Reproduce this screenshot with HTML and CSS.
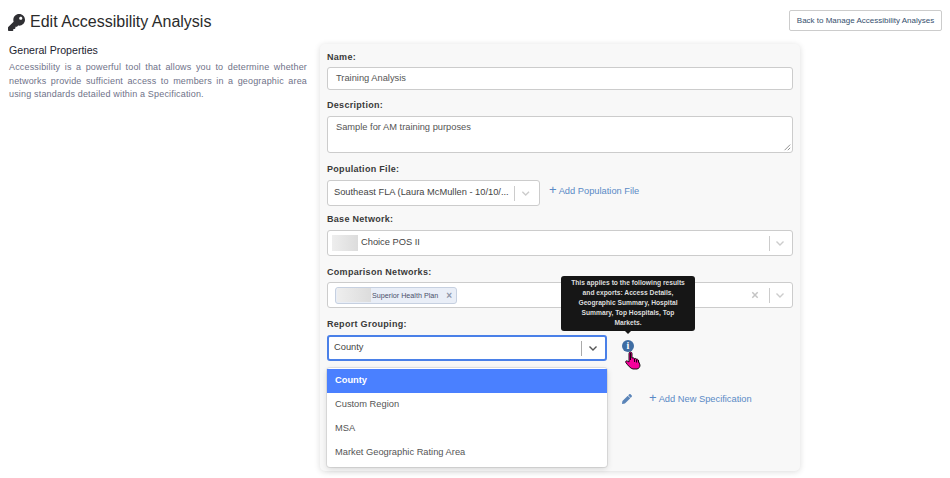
FILE: index.html
```html
<!DOCTYPE html>
<html lang="en">
  <head>
    <meta charset="UTF-8" />
    <meta name="viewport" content="width=device-width, initial-scale=1.0" />
    <title>Edit Accessibility Analysis</title>
    <link rel="stylesheet" href="styles.css">
  </head>

  <body>
    <header class="page-head">
      <h1 class="page-title">
        <svg class="key-icon" viewBox="0 0 512 512"><path d="M512 176.001C512 273.203 433.202 352 336 352c-11.22 0-22.19-1.062-32.827-3.069l-24.012 27.014A23.999 23.999 0 0 1 261.223 384H224v40c0 13.255-10.745 24-24 24h-40v40c0 13.255-10.745 24-24 24H24c-13.255 0-24-10.745-24-24v-78.059c0-6.365 2.529-12.47 7.029-16.971l161.802-161.802C163.108 213.814 160 195.271 160 176 160 78.798 238.797.001 335.999 0 433.488-.001 512 78.511 512 176.001zM336 128c0 26.51 21.49 48 48 48s48-21.49 48-48-21.49-48-48-48-48 21.49-48 48z"/></svg>
        Edit Accessibility Analysis
      </h1>
      <button class="back-btn">Back to Manage Accessibility Analyses</button>
    </header>

    <main class="columns">
      <section class="intro">
        <h2>General Properties</h2>
        <p>Accessibility is a powerful tool that allows you to determine whether networks provide sufficient access to members in a geographic area using standards detailed within a Specification.</p>
      </section>

      <form class="panel">
        <div class="field field-name">
          <label>Name:</label>
          <div class="text-input">Training Analysis</div>
        </div>

        <div class="field">
          <label>Description:</label>
          <div class="text-input text-area">
            Sample for AM training purposes
            <svg class="grip" viewBox="0 0 10 10"><path d="M9 2L2 9M9 6L6 9" /></svg>
          </div>
        </div>

        <div class="field field-population">
          <label>Population File:</label>
          <div class="inline-row">
            <div class="select select-small">
              <span class="select-value">Southeast FLA (Laura McMullen - 10/10/...</span>
              <span class="select-sep"></span>
              <svg class="chevron" viewBox="0 0 20 20"><path d="M5 8l5 5 5-5" /></svg>
            </div>
            <a class="add-link"><span class="plus">+</span> Add Population File</a>
          </div>
        </div>

        <div class="field">
          <label>Base Network:</label>
          <div class="select">
            <span class="blur-box"></span>
            <span class="select-value">Choice POS II</span>
            <span class="select-sep"></span>
            <svg class="chevron" viewBox="0 0 20 20"><path d="M5 8l5 5 5-5" /></svg>
          </div>
        </div>

        <div class="field field-comparison">
          <label>Comparison Networks:</label>
          <div class="select">
            <span class="tag">
              <span class="blur-box tag-blur"></span>
              <span class="tag-name">Superior Health Plan</span>
              <span class="tag-x">×</span>
            </span>
            <span class="spacer"></span>
            <svg class="clear" viewBox="0 0 20 20"><path d="M5.5 5.5l9 9M14.5 5.5l-9 9" /></svg>
            <span class="select-sep"></span>
            <svg class="chevron" viewBox="0 0 20 20"><path d="M5 8l5 5 5-5" /></svg>
          </div>
        </div>

        <div class="field">
          <label>Report Grouping:</label>
          <div class="inline-row">
            <div class="select select-open">
              <span class="select-value">County</span>
              <span class="select-sep"></span>
              <svg class="chevron" viewBox="0 0 20 20"><path d="M5 8l5 5 5-5" /></svg>
              <ul class="menu">
                <li class="active">County</li>
                <li>Custom Region</li>
                <li>MSA</li>
                <li>Market Geographic Rating Area</li>
              </ul>
            </div>
            <span class="info">
              <span class="info-dot">i</span>
              <span class="tooltip">This applies to the following results and exports: Access Details, Geographic Summary, Hospital Summary, Top Hospitals, Top Markets.</span>
              <svg class="hand" viewBox="0 0 17 19"><path d="M5.500 1c.8 0 1.500.6 1.500 1.500V7l1-.2c.8 0 1.200.4 1.400.7.8-.3 1.500 0 1.800.6.8-.3 1.600.1 1.800.8L15 14c0 2-1 3.500-3 4H8C5.500 17.500 3 14.500.8 11.500c-.5-1 .3-2 1.500-1.500L4 11V2.500C4 1.600 4.700 1 5.500 1z" /><path class="hand-lines" d="M5.500 2v7M9.500 8v3M11.500 8.500v3M13.500 9v2.500" /></svg>
            </span>
          </div>
        </div>

        <div class="spec-row">
          <svg class="pencil" viewBox="0 0 512 512"><path d="M497.9 142.1l-46.1 46.1c-4.7 4.7-12.3 4.7-17 0l-111-111c-4.7-4.7-4.7-12.3 0-17l46.1-46.1c18.7-18.7 49.1-18.7 67.9 0l60.1 60.1c18.8 18.7 18.8 49.1 0 67.9zM284.2 99.8L21.6 362.4.4 483.9c-2.9 16.4 11.4 30.6 27.8 27.8l121.5-21.3 262.600-262.600c4.700-4.700 4.700-12.300 0-17l-111-111c-4.800-4.700-12.400-4.700-17.100 0z"/></svg>
          <a class="add-link"><span class="plus">+</span> Add New Specification</a>
        </div>
      </form>
    </main>
  </body>
</html>
```

FILE: styles.css
```css
* {
  box-sizing: border-box;
}

body {
  margin: 0;
  height: 478px;
  overflow: hidden;
  background-color: #fff;
  font-family: "Liberation Sans", Arial, sans-serif;
  font-size: 10px;
  color: #333;
}

.page-head {
  display: flex;
  justify-content: space-between;
  align-items: flex-start;
  padding: 10px 8px 0 8px;
  height: 44px;
}

.page-title {
  display: flex;
  align-items: center;
  gap: 5px;
  margin: 2px 0 0 0;
  font-size: 16px;
  font-weight: normal;
  line-height: 20px;
  color: #2b2b2b;
}

.key-icon {
  width: 17px;
  height: 17px;
  fill: #2f2f33;
}

.back-btn {
  width: 153px;
  height: 21px;
  padding: 0;
  background-color: #fff;
  border: 1px solid #ccc;
  border-radius: 2px;
  font-family: inherit;
  font-size: 8px;
  color: #35506e;
}

.columns {
  display: flex;
  align-items: flex-start;
}

.intro {
  width: 320px;
  padding: 0 13px 0 9px;
}

.intro h2 {
  margin: 0 0 4px 0;
  font-size: 10.6px;
  font-weight: normal;
  line-height: 13px;
  color: #1c2330;
}

.intro p {
  margin: 0;
  font-size: 9px;
  line-height: 13.6px;
  letter-spacing: 0.17px;
  text-align: justify;
  color: #6f7289;
}

.panel {
  width: 480px;
  height: 427px;
  padding: 7px 7px 0 7px;
  background-color: #f8f8f8;
  border-radius: 5px;
  box-shadow: 0 1px 6px rgba(0, 0, 0, 0.14);
}

.field {
  margin-bottom: 10px;
}

.field label {
  display: block;
  margin-bottom: 5px;
  font-size: 9px;
  font-weight: bold;
  line-height: 12px;
  letter-spacing: 0.3px;
  color: #3a3a3a;
}

.field-name {
  margin-bottom: 9px;
}

.field-name label,
.field-comparison label {
  margin-bottom: 4px;
}

.field-population {
  margin-bottom: 7px;
}

.text-input {
  height: 23px;
  padding: 0 8px;
  background-color: #fff;
  border: 1px solid #ccc;
  border-radius: 3px;
  font-size: 9.3px;
  line-height: 21px;
  color: #555;
}

.text-area {
  position: relative;
  height: 37px;
  line-height: 20px;
}

.grip {
  position: absolute;
  right: 1px;
  bottom: 1px;
  width: 8px;
  height: 8px;
  fill: none;
  stroke: #777;
}

.inline-row {
  display: flex;
  align-items: center;
}

.select {
  position: relative;
  display: flex;
  align-items: center;
  height: 26px;
  padding: 0 5px 0 4px;
  background-color: #fff;
  border: 1px solid #ccc;
  border-radius: 3px;
  font-size: 9.3px;
  color: #444;
}

.select-value {
  flex: 1;
  padding: 0 0 2px 2px;
  white-space: nowrap;
}

.select-small {
  width: 213px;
  padding-right: 7px;
}

.select-open {
  width: 280px;
  border: 2px solid #4a80e8;
  padding: 0 5px 0 3px;
}

.select-sep {
  width: 1px;
  height: 15px;
  margin: 0 3px 0 5px;
  background-color: #ccc;
}

.select-small .select-sep,
.select-open .select-sep {
  margin-right: 4px;
}

.select-open .select-sep {
  background-color: #aaa;
}

.chevron {
  width: 14px;
  height: 14px;
  fill: none;
  stroke: #ccc;
  stroke-width: 2;
}

.select-open .chevron {
  stroke: #555;
}

.clear {
  width: 12px;
  height: 12px;
  margin-right: 3px;
  fill: none;
  stroke: #c4c4c4;
  stroke-width: 2.5;
}

.spacer {
  flex: 1;
}

.blur-box {
  width: 26px;
  height: 16px;
  margin-right: 1px;
  background: linear-gradient(90deg, #eee, #dcdcdc);
}

.tag {
  display: flex;
  align-items: center;
  width: 122px;
  height: 17px;
  margin-left: 3px;
  padding-left: 1px;
  background-color: #e9eef7;
  border: 1px solid #c6d0e0;
  border-radius: 3px;
}

.tag-blur {
  width: 34px;
  height: 14px;
}

.tag-name {
  font-size: 7.2px;
  color: #49506a;
}

.tag-x {
  margin-left: 8px;
  font-size: 10px;
  font-weight: bold;
  color: #8d95a8;
}

.menu {
  position: absolute;
  top: 31px;
  left: -2px;
  width: 280px;
  margin: 0;
  padding: 1px 0 2px 0;
  list-style: none;
  background-color: #fff;
  border-radius: 3px;
  box-shadow: 0 0 0 1px rgba(0, 0, 0, 0.08), 0 2px 6px rgba(0, 0, 0, 0.14);
  z-index: 2;
}

.menu li {
  height: 24px;
  padding-left: 8px;
  line-height: 23px;
  font-size: 9.3px;
  color: #555;
}

.menu .active {
  background-color: #4a80ff;
  font-weight: bold;
  color: #fff;
}

.add-link {
  margin-left: 9px;
  margin-bottom: 5px;
  font-size: 9.3px;
  color: #5a8ac6;
}

.plus {
  font-size: 13px;
  line-height: 10px;
}

.info {
  position: relative;
  margin-left: 15px;
  margin-bottom: 4px;
}

.info-dot {
  display: block;
  width: 12px;
  height: 12px;
  background-color: #3f6da3;
  border-radius: 50%;
  font-family: "Liberation Serif", serif;
  font-size: 10px;
  font-weight: bold;
  line-height: 12px;
  text-align: center;
  color: #fff;
}

.tooltip {
  position: absolute;
  bottom: 21px;
  left: -61px;
  width: 134px;
  height: 55px;
  padding: 1.5px 7px;
  background-color: #161616;
  border-radius: 3px;
  font-size: 6.7px;
  font-weight: bold;
  line-height: 10.2px;
  text-align: center;
  color: #ddd;
  will-change: opacity;
}

.tooltip::after {
  content: "";
  position: absolute;
  top: 55px;
  left: 64px;
  border-style: solid;
  border-width: 3px 3px 0 3px;
  border-color: #161616 transparent transparent transparent;
}

.hand {
  position: absolute;
  top: 11px;
  left: 3px;
  width: 17px;
  height: 19px;
  fill: #f5009b;
  stroke: #000;
  stroke-width: 0.9;
}

.hand .hand-lines {
  fill: none;
}

.spec-row {
  display: flex;
  align-items: center;
  margin-top: 32px;
  padding-left: 295px;
}

.pencil {
  width: 10px;
  height: 10px;
  fill: #5a84b8;
}

.spec-row .add-link {
  margin-left: 17px;
  margin-bottom: 0;
}
```
